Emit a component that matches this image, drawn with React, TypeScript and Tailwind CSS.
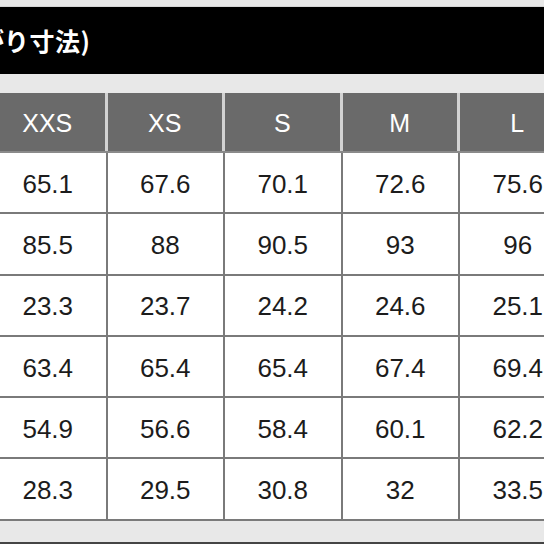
const sizes = ['XXS', 'XS', 'S', 'M', 'L'];

const rows = [
  ['65.1', '67.6', '70.1', '72.6', '75.6'],
  ['85.5', '88', '90.5', '93', '96'],
  ['23.3', '23.7', '24.2', '24.6', '25.1'],
  ['63.4', '65.4', '65.4', '67.4', '69.4'],
  ['54.9', '56.6', '58.4', '60.1', '62.2'],
  ['28.3', '29.5', '30.8', '32', '33.5'],
];

export default function App() {
  return (
    <div
      className="w-[544px] h-[544px] overflow-hidden bg-[#e8e8e8] flex flex-col"
      style={{ fontFamily: '"Liberation Sans", Arial, "Noto Sans CJK JP", sans-serif' }}
    >
      <div className="h-[7px] border-b border-[#d4d4d4]" />
      <div
        className="h-[67px] bg-black flex items-center overflow-hidden text-white font-bold text-[25px] whitespace-nowrap"
        style={{ fontFamily: '"Noto Sans CJK JP", sans-serif' }}
      >
        {/* title runs off the left edge; keep the cut-off part right-aligned */}
        <span className="w-[4px] shrink-0 flex justify-end">(仕上が</span>
        <span className="tracking-[0.5px]">り寸法)</span>
      </div>
      <div className="h-[19px]" />
      <div className="-ml-[10px] w-[600px]">
        <div className="flex h-[60px] bg-[#6a6a6a] border-b-2 border-[#8a8a8a]">
          {sizes.map((s) => (
            <div
              key={s}
              className="w-[117.5px] shrink-0 border-r-[3px] border-[#d2d2d2] flex items-center justify-center pt-[3px] text-white text-[25px]"
            >
              {s}
            </div>
          ))}
        </div>
        {rows.map((r, i) => (
          <div key={i} className="flex h-[61.3px] bg-white border-b-2 border-[#7a7a7a]">
            {r.map((v, j) => (
              <div
                key={j}
                className="w-[117.5px] shrink-0 border-r-2 border-[#7a7a7a] flex items-center justify-center pt-[3px] text-[#1c1c1c] text-[26px]"
              >
                {v}
              </div>
            ))}
          </div>
        ))}
      </div>
      <div className="flex-1" />
      <div className="h-[2px] bg-[#444]" />
    </div>
  );
}
